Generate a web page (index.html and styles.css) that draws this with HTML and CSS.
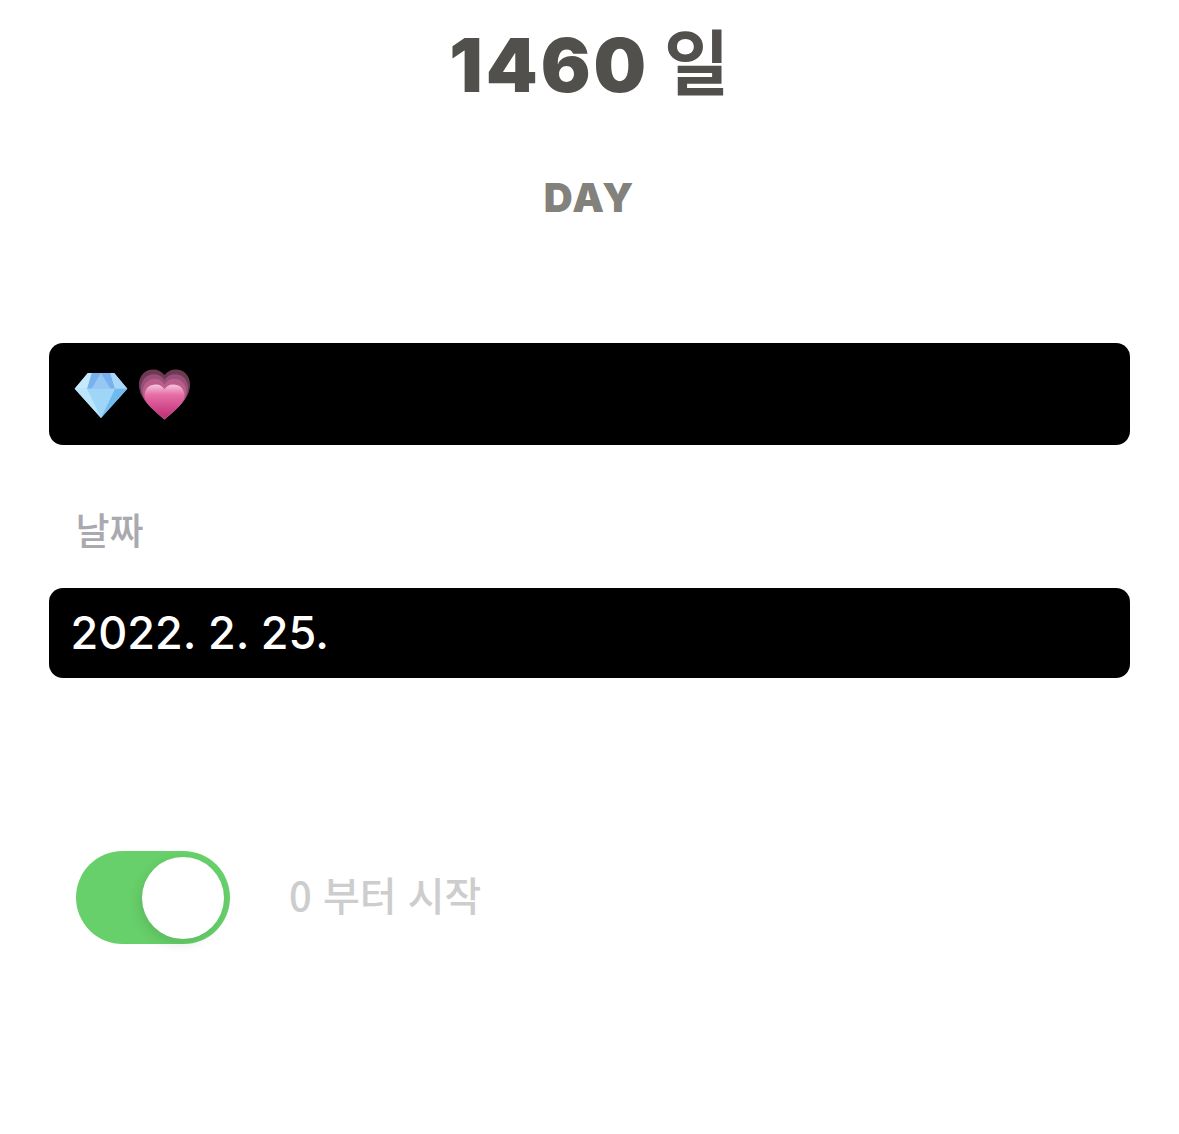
FILE: index.html
```html
<!DOCTYPE html>
<html lang="ko">
  <head>
    <meta charset="UTF-8" />
    <meta name="viewport" content="width=device-width, initial-scale=1.0" />
    <title>D-Day</title>
    <link rel="stylesheet" href="styles.css">
  </head>
  <body>
    <div id="page">
      <h1 class="count"><span class="count-num">1460</span> <span class="count-unit">일</span></h1>
      <div class="count-label">DAY</div>

      <div class="field field-title">
        <svg class="emoji" viewBox="0 0 56 50" width="54" height="47">
          <path d="M14 2H42L56 19L28 50L0 19Z" fill="#a5dafa" />
          <path d="M18 2H38L43 19H13Z" fill="#79b1ee" />
          <path d="M28 2L38 19H18Z" fill="#97c8f4" />
          <path d="M14 2L18 2L13 19L0 19Z" fill="#c6e9fc" />
          <path d="M42 2L38 2L43 19L56 19Z" fill="#a9d8f9" />
          <path d="M13 19H43L28 50Z" fill="#9fd6f8" />
          <path d="M0 19H13L28 50Z" fill="#bbe5fb" />
          <path d="M56 19H43L28 50Z" fill="#6fbbf0" />
        </svg>
        <svg class="emoji" viewBox="0 0 56 54" width="53" height="52">
          <defs>
            <linearGradient id="heartBody" x1="0" y1="0" x2="0" y2="1">
              <stop offset="0" stop-color="#f4c6dc" />
              <stop offset="0.3" stop-color="#e66ea6" />
              <stop offset="1" stop-color="#bf2c74" />
            </linearGradient>
          </defs>
          <path d="M28 54C14 42 1 32 1 17C1 7 8 1 16 1C21 1 25 3 28 7C31 3 35 1 40 1C48 1 55 7 55 17C55 32 42 42 28 54Z" fill="#6d3a52" />
          <path d="M28 54C15 43 3 33 3 21C3 12 9 6 17 6C22 6 25 8 28 12C31 8 34 6 39 6C47 6 53 12 53 21C53 33 41 43 28 54Z" fill="#96507a" />
          <path d="M28 54C16 44 5 35 5 25C5 16 11 11 18 11C22 11 26 13 28 17C30 13 34 11 38 11C45 11 51 16 51 25C51 35 40 44 28 54Z" fill="#bb5c8a" />
          <path d="M28 53C17 44 7 37 7 29C7 21 12 17 19 17C23 17 26 19 28 22C30 19 33 17 37 17C44 17 49 21 49 29C49 37 39 44 28 53Z" fill="url(#heartBody)" />
        </svg>
      </div>

      <div class="field-label">날짜</div>
      <div class="field field-date">2022. 2. 25.</div>

      <div class="option">
        <div class="switch"><div class="switch-knob"></div></div>
        <span class="option-text">0 부터 시작</span>
      </div>
    </div>
  </body>
</html>
```

FILE: styles.css
```css
html,
body {
  margin: 0;
  padding: 0;
  background: #fff;
}
body {
  font-family: Inter, "Noto Sans CJK KR", sans-serif;
}
#page {
  height: 1134px;
  padding: 0 49px 0 48.5px;
  box-sizing: border-box;
  overflow: hidden;
}

/* Count */
.count {
  margin: 0;
  padding-top: 21px;
  height: 87px;
  font-size: 74px;
  line-height: 88px;
  font-weight: 900;
  color: #52504c;
  text-align: center;
  white-space: nowrap;
}
.count-num {
  letter-spacing: 3px;
}
.count-unit {
  font-family: "Noto Sans CJK KR", sans-serif;
  font-size: 71px;
  font-weight: 700;
  line-height: 1;
  vertical-align: 3px;
}
.count-label {
  margin-top: 64px;
  height: 48px;
  font-size: 40px;
  line-height: 52px;
  font-weight: 900;
  letter-spacing: 1.5px;
  color: #82817c;
  text-align: center;
}

/* Fields */
.field {
  background: #000;
  border-radius: 14px;
}
.field-title {
  margin-top: 123px;
  height: 102px;
  padding-left: 25.5px;
  display: flex;
  align-items: center;
  gap: 10px;
}
.emoji {
  display: block;
}
.field-label {
  margin-top: 62px;
  padding-left: 27px;
  height: 44px;
  font-family: "Noto Sans CJK KR", sans-serif;
  font-size: 37px;
  font-weight: 500;
  line-height: 44px;
  color: #a9a9af;
}
.field-date {
  margin-top: 37px;
  height: 90px;
  padding-left: 22px;
  font-size: 45px;
  line-height: 90px;
  font-weight: 500;
  color: #fff;
}

/* Option */
.option {
  margin-top: 173px;
  padding-left: 27.5px;
  display: flex;
  align-items: center;
  gap: 59px;
}
.switch {
  width: 154px;
  height: 93px;
  padding: 6px 6px 5px;
  box-sizing: border-box;
  border-radius: 47px;
  background: #67d06a;
  display: flex;
  justify-content: flex-end;
}
.switch-knob {
  width: 82px;
  height: 82px;
  border-radius: 50%;
  background: #fff;
  box-shadow: -3px 5px 12px rgba(0, 0, 0, 0.1);
}
.option-text {
  padding-bottom: 8px;
  font-family: "Noto Sans CJK KR", sans-serif;
  font-size: 40px;
  font-weight: 500;
  color: #cdcdcd;
}
```
